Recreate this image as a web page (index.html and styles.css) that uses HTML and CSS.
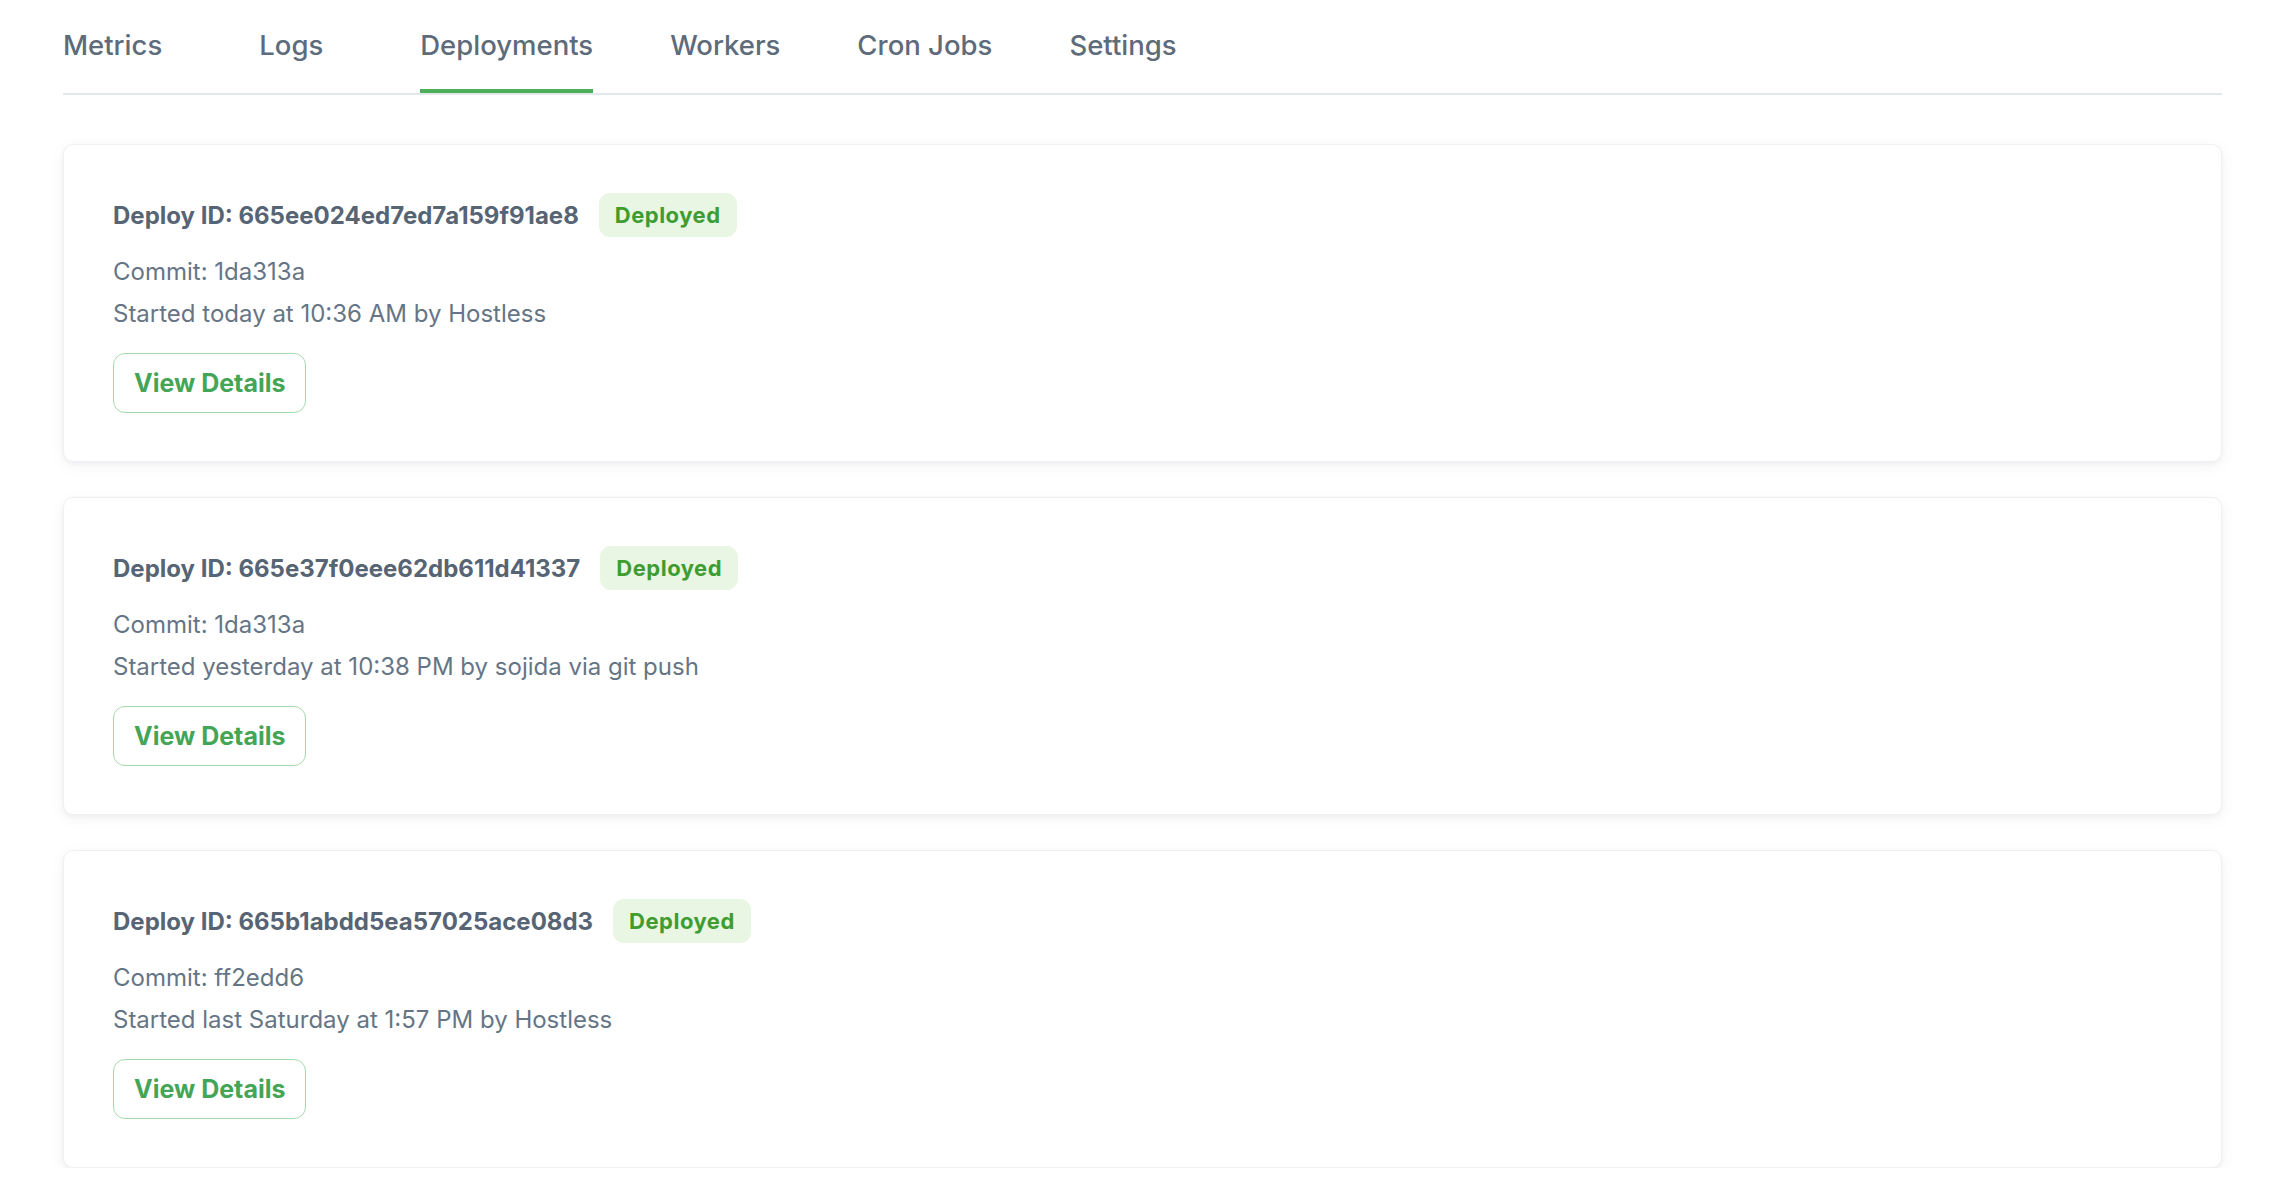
FILE: index.html
```html
<!DOCTYPE html>
<html lang="en">
<head>
<meta charset="utf-8">
<title>Deployments</title>
<link rel="stylesheet" href="styles.css">
</head>
<body>
<div class="page">
  <nav class="tabs">
    <a class="tab">Metrics</a>
    <a class="tab">Logs</a>
    <a class="tab tab--active">Deployments</a>
    <a class="tab">Workers</a>
    <a class="tab">Cron Jobs</a>
    <a class="tab">Settings</a>
  </nav>
  <div class="deploys">
    <section class="card">
      <div class="card-head">
        <span class="deploy-id">Deploy ID: 665ee024ed7ed7a159f91ae8</span>
        <span class="badge">Deployed</span>
      </div>
      <div class="meta">
        <p>Commit: 1da313a</p>
        <p>Started today at 10:36 AM by Hostless</p>
      </div>
      <button class="btn">View Details</button>
    </section>
    <section class="card">
      <div class="card-head">
        <span class="deploy-id">Deploy ID: 665e37f0eee62db611d41337</span>
        <span class="badge">Deployed</span>
      </div>
      <div class="meta">
        <p>Commit: 1da313a</p>
        <p>Started yesterday at 10:38 PM by sojida via git push</p>
      </div>
      <button class="btn">View Details</button>
    </section>
    <section class="card">
      <div class="card-head">
        <span class="deploy-id">Deploy ID: 665b1abdd5ea57025ace08d3</span>
        <span class="badge">Deployed</span>
      </div>
      <div class="meta">
        <p>Commit: ff2edd6</p>
        <p>Started last Saturday at 1:57 PM by Hostless</p>
      </div>
      <button class="btn">View Details</button>
    </section>
  </div>
</div>
</body>
</html>
```
FILE: styles.css
```css
* { box-sizing: border-box; }
html, body {
  margin: 0;
  background: #ffffff;
}
body {
  font-family: Inter, "Noto Sans", "Liberation Sans", sans-serif;
  color: #627080;
}
.page {
  padding: 0 60px 0 63px;
}
.tabs {
  display: flex;
  border-bottom: 2px solid #e3e8ee;
}
.tab {
  font-size: 27.5px;
  font-weight: 500;
  line-height: 33px;
  color: #5d6b7b;
  padding: 29px 0 27px;
  border-bottom: 4px solid transparent;
  margin-right: 77px;
  cursor: pointer;
}
.tab:nth-child(-n+2) {
  margin-right: 97px;
}
.tab--active {
  border-bottom-color: #4caf5a;
}
.deploys {
  display: flex;
  flex-direction: column;
  gap: 35px;
  padding-top: 49px;
}
.card {
  border: 1px solid #eef0f3;
  border-radius: 10px;
  padding: 48px 48px 48px 49px;
  background: #fff;
  box-shadow: 0 2px 4px rgba(20, 30, 50, 0.04), 0 4px 16px rgba(20, 30, 50, 0.05);
}
.card-head {
  display: flex;
  align-items: center;
  gap: 20px;
  height: 44px;
}
.deploy-id {
  font-size: 24px;
  font-weight: 700;
  color: #566474;
}
.badge {
  display: inline-block;
  height: 44px;
  line-height: 44px;
  padding: 0 16px;
  border-radius: 11px;
  background: #e9f6e3;
  color: #3f9c31;
  font-size: 22px;
  font-weight: 700;
  letter-spacing: 0.5px;
}
.meta {
  margin-top: 14px;
}
.meta p {
  margin: 0;
  font-size: 24px;
  line-height: 42px;
  color: #667585;
}
.btn {
  display: inline-flex;
  align-items: center;
  margin-top: 18px;
  height: 60px;
  padding: 0 20px;
  border: 1.5px solid #a6d8ae;
  border-radius: 12px;
  background: #fff;
  color: #44a556;
  font-family: inherit;
  font-size: 25px;
  font-weight: 700;
  cursor: pointer;
}
```
